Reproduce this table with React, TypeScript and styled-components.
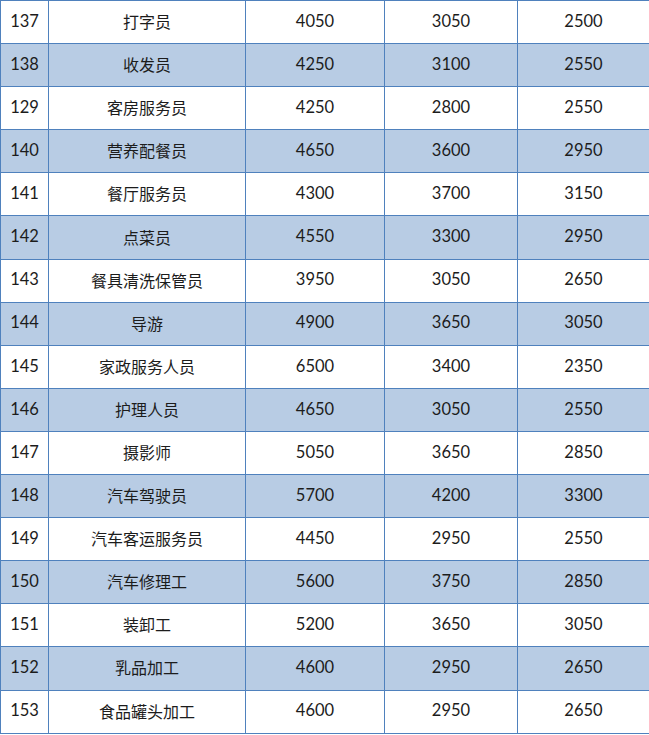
import styled, { createGlobalStyle } from 'styled-components';

const GlobalStyle = createGlobalStyle`
  html, body {
    margin: 0;
    padding: 0;
    background: #ffffff;
  }
`;

const Table = styled.table`
  border-collapse: collapse;
  table-layout: fixed;
  width: 649px;
  font-family: 'Lato', 'Noto Sans CJK SC', sans-serif;
  color: #1c1c1c;
`;

const Col = styled.col<{ $w: number }>`
  width: ${(p) => p.$w}px;
`;

const Row = styled.tr<{ $striped: boolean }>`
  height: 43.1px;
  background: ${(p) => (p.$striped ? '#b8cce4' : '#ffffff')};
`;

const Cell = styled.td<{ $cjk?: boolean }>`
  border: 1px solid #4f81bd;
  padding: 0 0 2px;
  text-align: center;
  vertical-align: middle;
  line-height: 1;
  font-size: ${(p) => (p.$cjk ? '16px' : '16.5px')};
  font-family: ${(p) =>
    p.$cjk ? "'Noto Sans CJK SC', sans-serif" : "'Lato', sans-serif"};
  font-weight: ${(p) => (p.$cjk ? 400 : 400)};
`;

type Job = [string, string, number, number, number];

const widths = [48, 197, 139, 133, 132];

const jobs: Job[] = [
  ['137', '打字员', 4050, 3050, 2500],
  ['138', '收发员', 4250, 3100, 2550],
  ['129', '客房服务员', 4250, 2800, 2550],
  ['140', '营养配餐员', 4650, 3600, 2950],
  ['141', '餐厅服务员', 4300, 3700, 3150],
  ['142', '点菜员', 4550, 3300, 2950],
  ['143', '餐具清洗保管员', 3950, 3050, 2650],
  ['144', '导游', 4900, 3650, 3050],
  ['145', '家政服务人员', 6500, 3400, 2350],
  ['146', '护理人员', 4650, 3050, 2550],
  ['147', '摄影师', 5050, 3650, 2850],
  ['148', '汽车驾驶员', 5700, 4200, 3300],
  ['149', '汽车客运服务员', 4450, 2950, 2550],
  ['150', '汽车修理工', 5600, 3750, 2850],
  ['151', '装卸工', 5200, 3650, 3050],
  ['152', '乳品加工', 4600, 2950, 2650],
  ['153', '食品罐头加工', 4600, 2950, 2650],
];

export default function App() {
  return (
    <>
      <GlobalStyle />
      <Table>
        <colgroup>
          {widths.map((w, i) => (
            <Col key={i} $w={w} />
          ))}
        </colgroup>
        <tbody>
          {jobs.map(([no, name, high, mid, low], i) => (
            <Row key={no + name} $striped={i % 2 === 1}>
              <Cell>{no}</Cell>
              <Cell $cjk>{name}</Cell>
              <Cell>{high}</Cell>
              <Cell>{mid}</Cell>
              <Cell>{low}</Cell>
            </Row>
          ))}
        </tbody>
      </Table>
    </>
  );
}
